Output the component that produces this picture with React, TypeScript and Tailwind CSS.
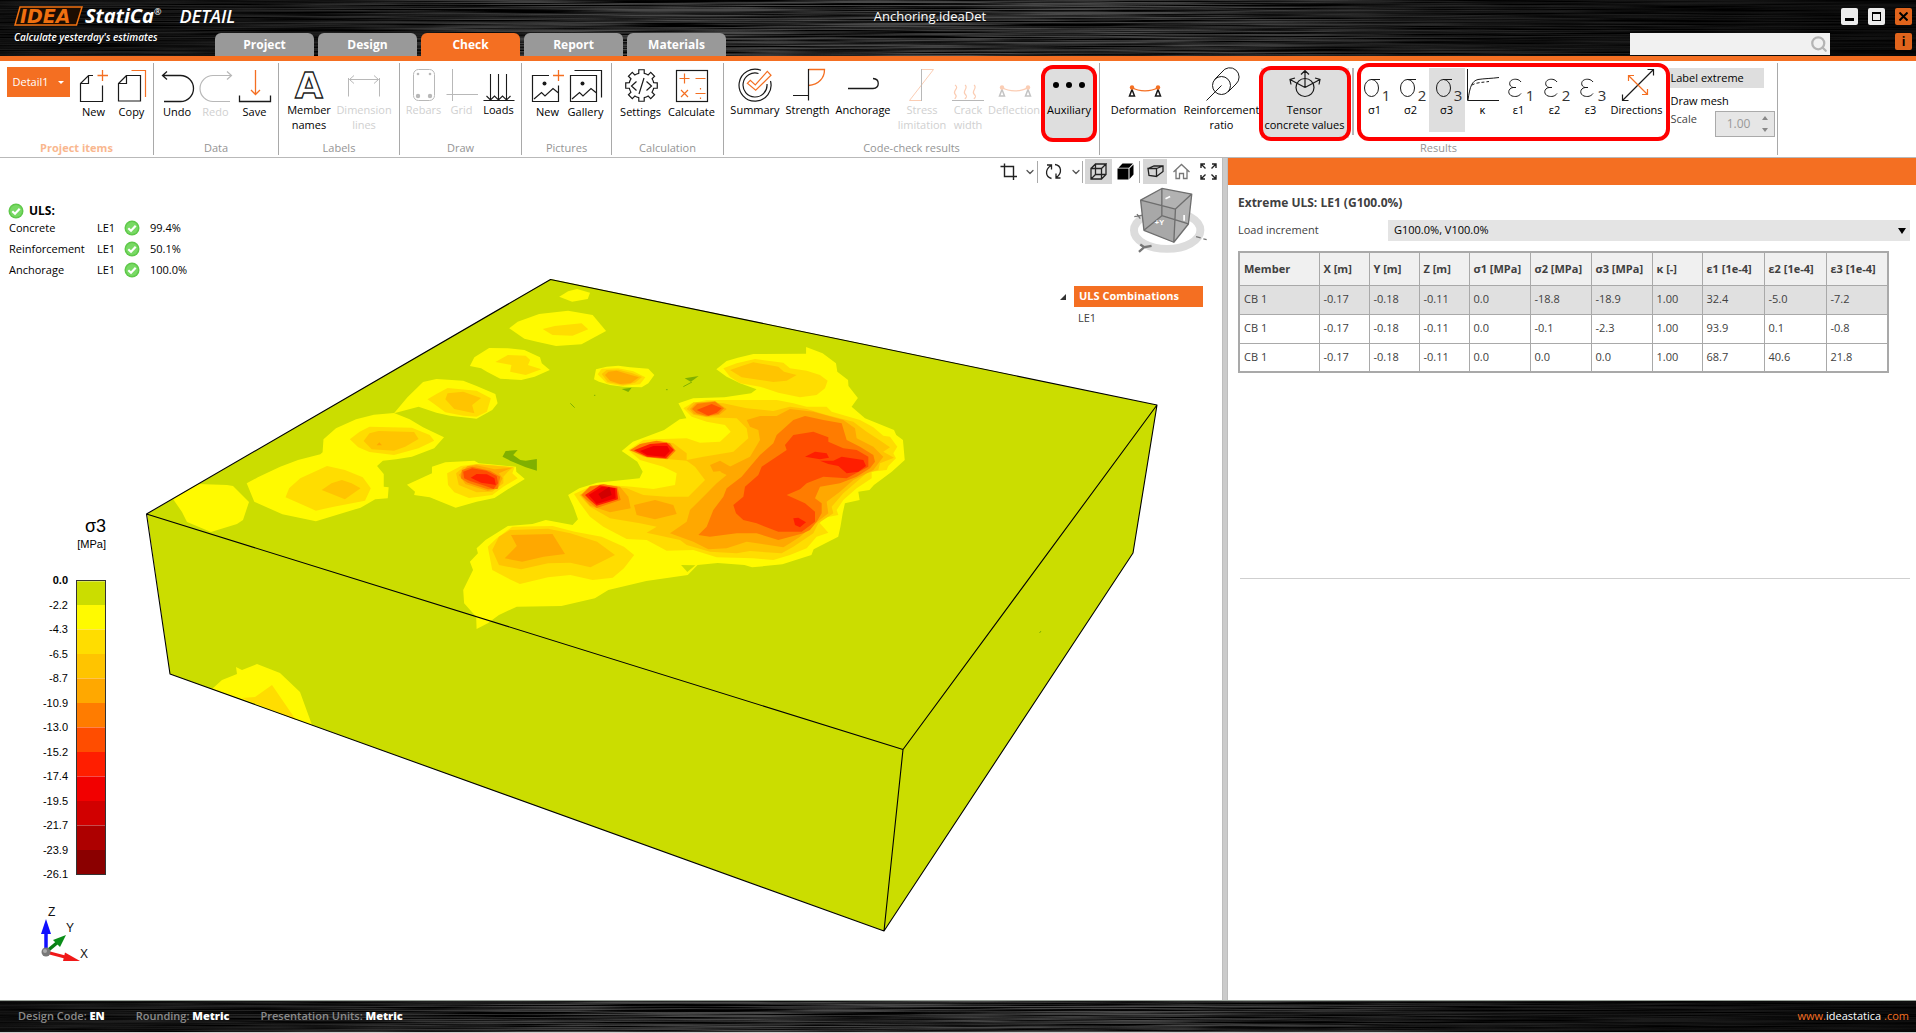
import React from "react";
import { Search, ChevronDown } from "lucide-react";

const O = "#f46f22";
const G = "#b8b8b8";
const K = "#1a1a1a";

function Brushed({ seed }: { seed: number }) {
  const id = "brushed" + seed;
  return (
    <svg className="pointer-events-none absolute inset-0 h-full w-full" preserveAspectRatio="none" aria-hidden="true">
      <filter id={id} x="0" y="0" width="100%" height="100%">
        <feTurbulence type="fractalNoise" baseFrequency="0.005 0.75" numOctaves="3" seed={seed} />
        <feColorMatrix type="matrix" values="0 0 0 0 0  0 0 0 0 0  0 0 0 0 0  2.6 0 0 0 -0.85" />
      </filter>
      <rect width="100%" height="100%" filter={`url(#${id})`} />
    </svg>
  );
}

function Icon({ children, stroke = K }: { children: React.ReactNode; stroke?: string }) {
  return (
    <svg width="34" height="34" viewBox="0 0 34 34" fill="none" stroke={stroke} strokeWidth="1" className="shrink-0 overflow-visible" aria-hidden="true">
      {children}
    </svg>
  );
}

function gearPath(cx: number, cy: number, outer: number, inner: number) {
  const pts: string[] = [];
  for (let i = 0; i < 8; i++) {
    const a = (i * Math.PI) / 4 - Math.PI / 2;
    const at = (r: number, d: number) => `${(cx + r * Math.cos(a + d)).toFixed(2)} ${(cy + r * Math.sin(a + d)).toFixed(2)}`;
    pts.push(`${i ? "L" : "M"}${at(inner, -0.22)} L${at(outer, -0.17)} L${at(outer, 0.17)} L${at(inner, 0.22)} A${inner} ${inner} 0 0 1 ${at(inner, 0.565)}`);
  }
  return pts.join(" ") + "Z";
}

const sub = (t: string) => (
  <text x="28" y="33" fontSize="15" textAnchor="middle" fill="#333" stroke="none" className="font-['Open_Sans',sans-serif]">{t}</text>
);
const sigma = (
  <>
    <ellipse cx="13.5" cy="20" rx="7" ry="8.5" />
    <path d="M13 11.5H22" />
  </>
);
const epsilon = <path d="M19 14C17 11 13 10.800 10.500 11.700C6.500 13.200 6.800 18.500 11 19.500H14M11 19.500C5.500 20.500 5.500 26.500 10 28C13.500 29 17 28.500 19 25.500" />;
const beam = (line: string, tri: string) => (
  <>
    <path d="M5 19.500C12 24 24 24 31 19.500" stroke={line} strokeWidth="1.300" />
    <path d="M5 21.500L2.500 28H7.500ZM31 21.500L28.500 28H33.500Z" stroke={tri} strokeWidth="1.500" />
    <circle cx="5" cy="19.500" r="2.200" fill={line} stroke="none" />
    <circle cx="31" cy="19.500" r="2.200" fill={line} stroke="none" />
  </>
);

const icons: Record<string, React.ReactNode> = {
  newDoc: <Icon><path d="M16 7.500H11.500L3.500 15.500V33.500H25.500V17.500M11.500 7.500V15.500H3.500" strokeWidth="1.200" /><path d="M20.500 7.500H31M25.500 2V13" stroke={O} strokeWidth="1.300" /></Icon>,
  copy: <Icon><path d="M11.500 7.500L3.500 15.500V33H25.500V7.500ZM11.500 7.500V15.500H3.500" strokeWidth="1.200" /><path d="M16.500 2.500H30.500V29" stroke={O} strokeWidth="1.200" /></Icon>,
  undo: <Icon><path d="M7 3.500L2.500 7.500L7 11.500M3 7.500H20.500A13 13 0 0 1 20.500 33.500H4" strokeWidth="1.300" /></Icon>,
  redo: <Icon stroke={G}><path d="M28 3.500L32.500 7.500L28 11.500M32 7.500H14A13 13 0 0 0 14 33.500H31" strokeWidth="1.200" /></Icon>,
  save: <Icon><path d="M17.500 2V26.500M13 22L17.500 26.500L22 22" stroke={O} strokeWidth="1.300" /><path d="M1.500 27.500V33.500H32.500V27.500" strokeWidth="1.300" /></Icon>,
  member: <Icon><text x="17" y="30" fontSize="36" fontWeight="700" textAnchor="middle" strokeWidth="1.300" className="font-['DejaVu_Sans',sans-serif]">A</text></Icon>,
  dimension: <Icon stroke={G}><path d="M1.500 10V28.500M32.500 10V28.500M2.500 11.500H31.500M7 7.500L2.500 11.500L7 15.500M27 7.500L31.500 11.500L27 15.500" /></Icon>,
  rebars: <Icon stroke={G}><rect x="6.500" y="1.500" width="21" height="31" rx="5" /><g fill={G} stroke="none"><circle cx="11" cy="6" r="1.300" /><circle cx="23" cy="6" r="1.300" /><circle cx="11" cy="28" r="2.200" /><circle cx="23" cy="28" r="2.200" /></g></Icon>,
  grid: <Icon stroke={G}><path d="M7.500 1V33M1.500 26.500H33" /></Icon>,
  loads: <Icon><path d="M1.500 32.500H32.500M8.500 6V32M16.500 6V32M24.500 6V32M4.500 28L8.500 32L12.500 28L16.500 32L20.500 28L24.500 32L28.500 28" strokeWidth="1.100" /></Icon>,
  newPic: <Icon><path d="M18 7.500H1.500V33.500H27.500V17.500M3 31L10.500 24.500L14 28L22 20.500L27.500 25" strokeWidth="1.200" /><circle cx="13.500" cy="15.500" r="2" fill={K} stroke="none" /><path d="M22 7.500H33M27.500 2V13" stroke={O} strokeWidth="1.300" /></Icon>,
  gallery: <Icon><path d="M1.500 7.500H27.500V33.500H1.500ZM3 31L10.500 24.500L14 28L22 20.500L27.500 25M5.500 2.500H32.500V29.500" strokeWidth="1.200" /><circle cx="13.500" cy="15.500" r="2" fill={K} stroke="none" /></Icon>,
  settings: <Icon><path d={gearPath(17.5, 17.5, 16, 12.5)} strokeWidth="1.200" /><path d="M12.500 13.500L7.500 18L12.500 22.500M22.500 13.500L27.500 18L22.500 22.500M20 10L15 26" strokeWidth="1.200" /></Icon>,
  calculate: <Icon><rect x="1.500" y="2.500" width="31" height="31" strokeWidth="1.200" /><g stroke={O} strokeWidth="1.200"><path d="M4.500 10.500H14.500M9.500 5.500V15.500M20.500 10.500H30.500M6 22L13 29M13 22L6 29M20.500 25.500H30.500M25.500 20V21.500M25.500 29.500V31" /></g></Icon>,
  summary: <Icon><path d="M23 2.300A16 16 0 1 0 32.500 13M20.500 5.500A12 12 0 1 0 29 16" strokeWidth="1.200" /><path d="M9.300 15.300L12.300 12.300L17.300 17L29.300 3.300L33 7.300L17.700 22.300Z" stroke={O} strokeWidth="1.200" /></Icon>,
  strength: <Icon><path d="M17.500 1.500H33.500C33.500 10 28 16.500 17.500 17.500" stroke={O} strokeWidth="1.300" /><path d="M17.500 1V32.500M2 27.500H17.500" strokeWidth="1.200" /></Icon>,
  anchorage: <Icon><path d="M2 20.500H27C34 20 34 11 27 10.500" strokeWidth="1.300" /></Icon>,
  stress: <Icon><path d="M16.500 1.500H28.500L4.500 32.500H16.500" stroke="#fbcdb4" /><path d="M16.500 1V33" stroke={G} /></Icon>,
  crack: <Icon stroke="#fbcdb4"><path d="M4 17C9 20 1 23 4 26S4 29 4 31M14 17C18 20 11 23 14 26S15 29 14 31M23 17C27 20 20 23 23 26S24 29 23 31" strokeWidth="1.200" /><path d="M1 32.500H33" stroke={G} /></Icon>,
  deflection: <Icon>{beam("#fbcdb4", "#c4c4c4")}</Icon>,
  auxiliary: <Icon><g fill="#000" stroke="none"><circle cx="4" cy="17" r="3" /><circle cx="17" cy="17" r="3" /><circle cx="30" cy="17" r="3" /></g></Icon>,
  deformation: <Icon>{beam(O, K)}</Icon>,
  ratio: <Icon><circle cx="16.500" cy="17.500" r="9" /><path d="M9.500 11.500L17 4M23 24L31 16M17 4A9.300 9.300 0 1 1 31 16M16.500 17.500L1.500 32.500" /></Icon>,
  tensor: <Icon><circle cx="17" cy="19.500" r="9" strokeWidth="1.200" /><path d="M17 19.500V2.500M13 6.500L17 2.500L21 6.500M17 19.500L2 11.500M3 16.500L2 11.500L7 10M17 19.500L32 11.500M31 16.500L32 11.500L27 10" strokeWidth="1.200" /></Icon>,
  s1: <Icon>{sigma}{sub("1")}</Icon>,
  s2: <Icon>{sigma}{sub("2")}</Icon>,
  s3: <Icon>{sigma}{sub("3")}</Icon>,
  kappa: <Icon><path d="M1.500 1V32.500H33M2 32C4 18 6 13 12 11.500C18 10.500 26 10.500 33 9.500" /><path d="M6 17C10 14.500 16 14.500 23 13.500" strokeDasharray="3 2" /></Icon>,
  e1: <Icon>{epsilon}{sub("1")}</Icon>,
  e2: <Icon>{epsilon}{sub("2")}</Icon>,
  e3: <Icon>{epsilon}{sub("3")}</Icon>,
  directions: <Icon><path d="M2.500 32.500L33.500 1.500M2.500 26.500V32.500H8.500M27.500 1.500H33.500V7.500" strokeWidth="1.200" /><path d="M8.500 7.500L27.500 26.500M8.500 13V7.500H14M22 26.500H27.500V21" stroke={O} strokeWidth="1.200" /></Icon>,
};

function Tool({ icon, label, w, disabled, active, low }: { icon: string; label: string; w: string; disabled?: boolean; active?: boolean; low?: boolean }) {
  return (
    <button
      disabled={disabled}
      className={`${w} flex shrink-0 flex-col items-center text-[11px] leading-[15px] ${active ? "bg-[#dedede]" : ""} ${disabled ? "text-[#d0d0d0]" : "text-black"}`}
    >
      {icons[icon]}
      <span className={`whitespace-pre text-center ${low ? "pt-0.5" : ""}`}>{label}</span>
    </button>
  );
}

function Group({ label, w, accent, children }: { label: string; w: string; accent?: boolean; children: React.ReactNode }) {
  return (
    <section className={`${w} flex shrink-0 flex-col justify-between border-r border-[#a9a9a9] pt-[5px]`} aria-label={label}>
      <div className="flex justify-center">{children}</div>
      <div className={`text-center text-[11px] leading-[15px] ${accent ? "font-bold text-[#f9b78f]" : "text-[#949494]"}`}>{label}</div>
    </section>
  );
}

function Ring({ className }: { className: string }) {
  return <div className={`pointer-events-none absolute z-10 rounded-xl border-4 border-[#ff0000] ${className}`} />;
}

function Tick() {
  return (
    <svg width="16" height="16" viewBox="0 0 16 16" role="img" aria-label="OK">
      <circle cx="8" cy="8" r="7.500" fill="#5fc84a" />
      <circle cx="8" cy="8" r="6" fill="#78d964" />
      <path d="M4.300 8.200L7 10.700L11.700 5.700" fill="none" stroke="#fff" strokeWidth="2.200" />
    </svg>
  );
}

const C = ["#cbdd00", "#fffa00", "#ffdd00", "#ffc400", "#ffa800", "#ff7c00", "#ff4d00", "#ff1e00", "#f20000", "#d10000", "#ad0000", "#8b0000"];
const DG = "#7fb000";
const P = ({ c, p }: { c: string; p: string }) => <polygon points={p} fill={c} />;

function Block() {
  return (
    <svg className="absolute inset-0 h-full w-full" viewBox="0 158 1222 842" role="img" aria-label="Concrete block stress contour">
      <polygon points="551,279 1157,405 1133,553 884,931 170,674 147,514" fill={C[0]} />
      <polygon points="173,499 191,488 198,484 227,485 233,486 249,502 243,520 237,524 211,532 187,522 182,512" fill={C[1]} />
      <polygon points="212,689 222,680 237,674 236,667 242,670 257,664 280,673 300,692 312,725" fill={C[1]} />
      <polygon points="242,698 255,697 272,685 296,720" fill={C[2]} />
      <g transform="translate(240 260) scale(0.44643 0.33333)">
        <P c={C[1]} p="715,110 735,94 755,87 784,98 779,117 744,125" />
        <P c={C[1]} p="603,205 622,185 670,162 735,152 790,165 820,213 765,253 708,258 665,245 637,236" />
        <P c={C[1]} p="515,318 525,292 558,264 600,265 637,270 672,292 676,310 694,330 660,350 630,360 583,356 553,335 540,325" />
        <P c={C[1]} p="345,460 375,412 410,366 440,357 500,362 530,378 572,402 577,430 565,450 530,476 470,467 440,458 400,440" />
        <P c={C[1]} p="185,577 187,538 215,505 260,478 300,464 345,459 380,478 410,502 457,532 435,565 385,590 350,598 320,602 307,618 322,642 322,680 333,682 331,715 303,718 270,743 170,784 95,763 32,725 15,670 40,652 90,620 130,600 180,583" />
        <P c={C[1]} p="374,674 430,640 430,620 460,607 525,602 535,610 560,613 618,620 619,635 638,657 600,688 570,714 530,725 483,743 425,712 390,705 392,695" />
        <P c={C[2]} p="678,207 705,198 765,190 780,208 745,227 700,225" />
        <P c={C[2]} p="572,306 600,285 640,287 650,300 645,315 675,328 640,345 605,335 608,315" />
        <P c={C[2]} p="420,418 440,402 465,384 530,392 562,415 553,455 530,470 500,467 460,457 435,432" />
        <P c={C[2]} p="246,538 268,515 290,500 385,503 425,525 435,542 400,565 345,585 290,576 265,562" />
        <P c={C[2]} p="102,712 110,685 135,655 195,618 235,630 275,652 293,685 280,722 210,740 170,752" />
        <P c={C[2]} p="464,640 495,618 530,612 560,614 615,622 610,640 622,655 590,680 565,705 513,714 480,697 466,675" />
        <P c={C[3]} p="460,418 465,400 500,395 540,414 520,435 525,460 480,447" />
        <P c={C[3]} p="277,543 290,520 310,513 390,516 400,537 370,560 345,572 295,568" />
        <P c={C[4]} p="306,556 312,547 318,556" />
        <P c={C[3]} p="183,690 205,670 228,660 250,670 270,685 235,718" />
        <P c={C[3]} p="484,640 500,622 530,613 612,622 600,635 590,650 590,670 565,695 530,697 490,675" />
        <P c={C[4]} p="490,645 510,618 530,616 570,628 608,624 580,640 588,655 578,685 555,693 505,672" />
        <P c={C[5]} p="495,655 497,630 520,620 560,632 583,650 577,687 555,688 510,668" />
        <P c={C[6]} p="502,655 500,635 520,625 552,632 575,648 578,670 568,687 550,678 515,663" />
        <P c={C[7]} p="517,653 530,642 553,643 570,655 573,675 560,672 540,668" />
        <P c={DG} p="588,590 595,573 622,570 612,585 628,600 640,602 665,597 665,632 640,622 605,602" />
        <P c={C[1]} p="1268,261 1305,280 1335,310 1338,335 1362,360 1363,378 1384,414 1370,440 1400,475 1465,510 1470,525 1485,540 1489,600 1460,635 1420,675 1410,690 1385,695 1388,720 1355,730 1350,760 1345,800 1340,830 1285,868 1280,885 1215,913 1147,922 1130,915 1070,909 1025,915 1003,945 910,963 825,990 795,1015 720,1038 620,1040 580,1065 555,1090 530,1107 529,1070 502,1030 500,990 522,930 515,905 533,880 530,865 550,840 600,798 655,792 685,780 745,795 757,778 747,740 735,705 760,685 800,668 895,655 902,635 890,605 855,573 880,545 950,510 985,478 1000,475 982,430 1015,415 1085,412 1145,400 1157,388 1120,370 1090,350 1067,328 1090,303 1115,293 1150,282 1268,281" />
        <P c={C[0]} p="988,915 1020,916 1002,936" />
        <P c={C[2]} p="555,860 575,835 610,800 700,798 750,815 810,830 860,860 883,885 860,925 835,953 790,960 740,945 690,952 627,972 600,955 565,930" />
        <P c={C[3]} p="565,870 580,830 605,810 690,806 740,820 800,845 840,885 785,922 740,908 690,910 630,928 580,915" />
        <P c={C[4]} p="607,825 700,822 728,882 680,890 632,905 593,895 620,858" />
      </g>
      <g transform="translate(560 340) scale(0.33333)">
        <P c={C[1]} p="102,118 108,88 140,80 175,77 210,82 265,86 283,105 265,130 245,142 190,140 150,135 117,125" />
        <P c={C[2]} p="113,103 125,86 175,85 220,94 256,112 240,133 185,138 140,130" />
        <P c={C[3]} p="125,102 140,90 175,89 215,99 246,111 225,128 190,136 143,126" />
        <P c={C[4]} p="135,105 145,95 170,92 205,103 237,112 212,130 180,132 150,122" />
        <P c={DG} p="374,115 416,108 400,120 392,125" />
        <P c={DG} p="185,147 215,143 205,156" />
        <path d="M31 190L44 203M370 140L396 126M102 166H106M318 149H323" stroke={DG} strokeWidth="3" />
        <P c={C[2]} p="490,85 530,70 585,57 670,68 690,85 740,92 780,105 803,122 795,145 770,165 720,172 655,158 600,140 540,130 510,110" />
        <P c={C[3]} p="510,90 545,78 580,67 655,80 672,95 710,105 680,122 640,126 600,120 545,112" />
        <P c={C[2]} p="370,205 395,190 440,180 560,180 650,180 700,190 740,200 800,200 815,215 900,240 940,262 970,287 990,290 1012,320 1000,340 1008,355 985,378 980,390 935,395 935,415 890,445 850,480 830,510 835,525 785,535 780,550 805,578 770,590 740,625 690,645 640,660 580,655 470,652 400,630 320,632 260,600 200,597 130,560 90,530 60,490 42,462 80,445 120,433 215,440 280,447 345,435 350,400 310,380 240,360 205,330 250,300 285,298 380,295 420,308 480,305 512,275 495,255 440,245 395,230" />
        <P c={C[3]} p="380,207 400,187 490,190 560,205 640,213 690,200 740,207 800,225 880,245 920,275 950,295 990,322 970,335 1002,353 960,370 955,390 920,400 890,425 850,460 815,500 820,520 775,550 760,580 700,620 665,640 570,633 530,640 450,635 380,615 360,600 260,578 290,560 240,550 150,535 90,500 58,465 120,435 200,445 250,465 320,470 385,470 435,420 405,380 380,362 330,358 250,350 208,330 250,308 300,302 340,310 380,340 380,360 430,350 520,335 565,295 560,265 530,235 440,232 400,224" />
        <P c={C[4]} p="560,240 600,228 650,228 690,207 760,215 850,240 885,265 890,295 940,320 970,350 940,390 880,420 840,455 800,485 805,520 760,555 720,590 690,610 670,622 560,605 500,625 445,628 400,605 330,580 380,545 390,510 430,470 470,430 500,405 480,395 530,370 570,350 600,300 595,270 570,260" />
        <P c={C[4]} p="450,375 480,362 512,380 490,392 460,395" />
        <P c={C[4]} p="222,495 285,480 340,495 350,522 285,538 230,525" />
        <P c={C[4]} p="62,465 90,438 130,433 180,440 205,470 212,505 150,517 90,497" />
        <P c={C[5]} p="415,585 440,560 460,510 490,470 500,445 545,410 570,380 600,345 640,310 650,285 700,240 735,228 790,240 845,250 860,300 900,320 940,345 945,365 930,385 890,410 840,430 780,440 765,475 785,490 785,520 770,545 750,570 730,580 655,600 590,580 530,580 450,590" />
        <P c={C[6]} p="520,495 550,470 555,440 595,405 605,380 680,330 675,315 700,285 760,275 805,292 805,305 850,325 890,330 925,350 925,380 860,415 790,410 740,430 720,448 680,465 735,490 765,515 765,545 725,575 655,575 590,550 550,540 528,520" />
        <P c={C[7]} p="735,350 765,335 800,340 807,353 780,358" />
        <P c={C[7]} p="780,362 820,362 845,350 910,360 918,378 895,395 860,400 835,378 805,372" />
        <P c={C[7]} p="700,535 715,533 738,547 720,562 705,555" />
        <P c={C[4]} p="390,207 408,188 465,183 500,207 478,225 440,230 402,222" />
        <P c={C[5]} p="396,207 412,191 465,185 492,205 475,222 440,228 410,220" />
        <P c={C[6]} p="410,210 455,192 485,205 470,218 445,227" />
        <P c={C[5]} p="210,331 240,312 290,302 330,310 347,332 322,358 260,352" />
        <P c={C[7]} p="222,331 270,312 320,308 342,330 318,355 262,350" />
        <P c={C[8]} p="240,333 280,318 322,318 330,333 314,350 262,346" />
        <P c={C[5]} p="65,465 90,440 130,433 172,440 182,480 110,504 80,480" />
        <P c={C[7]} p="75,465 120,436 170,445 174,478 110,497 90,480" />
        <P c={C[8]} p="86,465 125,440 165,445 167,475 110,492" />
        <P c={C[9]} p="115,462 148,440 155,465 125,478" />
      </g>
      <path d="M146.500 514L550.500 279.500L1157 405L1133 553L884 931L170 674ZM146.500 514L903 749.500L1157 405M903 749.500L884 931" fill="none" stroke="#000" strokeWidth="1.100" strokeLinejoin="round" />
      <path d="M1039.500 633L1041 631" stroke={DG} />
    </svg>
  );
}

const scale = ["0.0", "-2.2", "-4.3", "-6.5", "-8.7", "-10.9", "-13.0", "-15.2", "-17.4", "-19.5", "-21.7", "-23.9", "-26.1"];

function Legend() {
  return (
    <div className="absolute left-8 top-[358px] w-[74px] font-['Liberation_Sans',Arial,sans-serif] text-black">
      <div className="text-right text-lg leading-5">σ3</div>
      <div className="text-right text-[11px] leading-4">[MPa]</div>
      <div className="mt-[22px] flex items-center justify-between">
        <div className="flex h-[306px] w-9 flex-col justify-between text-right text-[11px] leading-3">
          {scale.map((s, i) => <span key={s} className={i ? "" : "font-bold"}>{s}</span>)}
        </div>
        <div className="flex h-[295px] w-[30px] flex-col border border-[#333]">
          {C.map((c, i) => <div key={c} className={`flex-1 ${i % 2 ? "" : "border-t border-white/30"}`} style={{ background: c }} />)}
        </div>
      </div>
    </div>
  );
}

function Triad() {
  return (
    <svg className="absolute bottom-7 left-9" width="60" height="70" viewBox="36 903 60 70" role="img" aria-label="Axes">
      <path d="M46 953V930" stroke="#1010ff" strokeWidth="3.500" /><polygon points="46,920 41,935 51,935" fill="#1010ff" />
      <path d="M46 953L58 943" stroke="#0a7d14" strokeWidth="3.500" /><polygon points="66,936 53,941 60,948" fill="#0a8d18" />
      <path d="M46 953L65 958" stroke="#f01818" strokeWidth="3" /><polygon points="80,962 65,953.500 63,962" fill="#f01818" />
      <circle cx="46" cy="953" r="4.500" fill="#777" /><circle cx="45" cy="952" r="2" fill="#aaa" />
      <g fontSize="12" fill="#111" className="font-['Liberation_Sans',sans-serif]"><text x="48" y="917">Z</text><text x="66" y="933">Y</text><text x="80" y="959">X</text></g>
    </svg>
  );
}

function NavCube() {
  return (
    <svg className="absolute right-3 top-[27px]" width="83" height="70" viewBox="440 105 250 210" role="img" aria-label="View cube">
      <ellipse cx="561" cy="241" rx="100" ry="56" fill="none" stroke="#dcdcdc" strokeWidth="24" />
      <polygon points="545,115 635,132 625,222 581,277 491,241 481,150" fill="#b2b2b2" />
      <polygon points="481,150 586,177 581,277 491,241" fill="#a8a8a8" />
      <g fill="none" stroke="#6e6e6e" strokeWidth="4" strokeLinejoin="round">
        <path d="M545 115L635 132L586 177L481 150ZM481 150L491 241L581 277L625 222L635 132M586 177L581 277M545 115V197L491 241M545 197L625 222" />
      </g>
      <g fill="#fff" fontWeight="700" fontSize="22" className="font-['Liberation_Sans',sans-serif]"><text x="524" y="226">+Y</text></g>
      <path d="M556 146L570 139M612 195V212" stroke="#fff" strokeWidth="5" />
      <path d="M480 284L492 292L514 288M492 292L476 306" stroke="#777" strokeWidth="7" fill="none" />
      <path d="M462 200L486 196M470 192L480 206M648 260L662 264M670 267L680 269" stroke="#777" strokeWidth="4" />
    </svg>
  );
}

function TB({ children, w, active, label }: { children: React.ReactNode; w: string; active?: boolean; label: string }) {
  return <button aria-label={label} className={`${w} flex h-[25px] items-center justify-center ${active ? "bg-[#d6d6d6]" : ""}`}>{children}</button>;
}
const Sep = () => <div className="h-[22px] w-px bg-[#aaa]" />;
const S = ({ children, size = 17 }: { children: React.ReactNode; size?: number }) => (
  <svg width={size} height={size} viewBox="0 0 17 17" fill="none" stroke="#222" strokeWidth="1.300" aria-hidden="true">{children}</svg>
);

function ViewToolbar() {
  return (
    <div className="absolute right-0.5 top-px flex items-center">
      <TB w="w-7" label="Section"><S><path d="M4.500 0.500V13.500H17M0.500 3.500H13.500V17" strokeWidth="1.400" /></S></TB>
      <TB w="w-[15px]" label="Section options"><ChevronDown size={12} strokeWidth={2.5} color="#555" /></TB>
      <Sep />
      <TB w="w-[31px]" label="Rotate"><S><path d="M6.500 15.500C0.500 14 -0.500 7 6 2.500M2 2H6.500V6.500M10 1.500C16.500 2.500 17.500 10 11.500 14.500M11 10.500V15H15.500" /></S></TB>
      <TB w="w-[13px]" label="Rotate options"><ChevronDown size={12} strokeWidth={2.5} color="#555" /></TB>
      <Sep />
      <div className="w-0.5" />
      <TB w="w-[27px]" active label="Wireframe"><S><path d="M1 5.500H11.500V16H1ZM1 5.500L5.500 1H16L11.500 5.500M16 1V11.500L11.500 16M5.500 1V11.500H16M5.500 11.500L1 16" /></S></TB>
      <TB w="w-[27px]" label="Solid"><S><path d="M0.500 5.500H11.500V16.500H0.500Z" fill="#000" stroke="none" /><path d="M1.500 4.700L5.500 0.500H16L12 4.700ZM12.500 5.500L16.500 1.500V11.500L12.500 16Z" fill="#000" stroke="none" /></S></TB>
      <Sep />
      <div className="w-[3px]" />
      <TB w="w-6" active label="Perspective"><S><path d="M1 5.500H9.500V13.500L2 12.500ZM1 5.500L7 3H16V8.500L9.500 13.500M9.500 5.500L16 3" /></S></TB>
      <TB w="w-[29px]" label="Home"><S><path d="M0.500 9L8.500 1.500L16.500 9M3 7V15.500H6.500V10.500H10.500V15.500H14V7" stroke="#777" /></S></TB>
      <TB w="w-6" label="Fit all"><S><path d="M1 5V1H5M1 1L5.500 5.500M12 1H16V5M16 1L11.500 5.500M1 12V16H5M1 16L5.500 11.500M12 16H16V12M16 16L11.500 11.500" strokeWidth="1.400" /></S></TB>
    </div>
  );
}

const checks = [["Concrete", "99.4%"], ["Reinforcement", "50.1%"], ["Anchorage", "100.0%"]];
const head = ["Member", "X [m]", "Y [m]", "Z [m]", "σ1 [MPa]", "σ2 [MPa]", "σ3 [MPa]", "κ [-]", "ε1 [1e-4]", "ε2 [1e-4]", "ε3 [1e-4]"];
const colW = ["w-20", "w-[50px]", "w-[50px]", "w-[50px]", "w-[61px]", "w-[61px]", "w-[61px]", "w-[50px]", "w-[62px]", "w-[62px]", "w-[62px]"];
const rows = [
  ["CB 1", "-0.17", "-0.18", "-0.11", "0.0", "-18.8", "-18.9", "1.00", "32.4", "-5.0", "-7.2"],
  ["CB 1", "-0.17", "-0.18", "-0.11", "0.0", "-0.1", "-2.3", "1.00", "93.9", "0.1", "-0.8"],
  ["CB 1", "-0.17", "-0.18", "-0.11", "0.0", "0.0", "0.0", "1.00", "68.7", "40.6", "21.8"],
];
const metal = "relative bg-[linear-gradient(90deg,#1a1a1a_0%,#262626_15%,#484848_32%,#484848_62%,#222222_78%,#101010_100%)]";

function Header() {
  return (
    <header className={`${metal} flex h-[61px] shrink-0 border-b-[5px] border-[#f46f22]`}>
      <Brushed seed={4} />
      <div className="relative w-[215px] shrink-0">
        <div className="flex items-start pl-3.5 pt-1.5 text-white">
          <svg width="69" height="20" viewBox="0 0 69 20" role="img" aria-label="IDEA" className="shrink-0 overflow-visible">
            <polygon points="6,1 68,1 62.500,19 1,19" fill="#1c0d02" stroke="#f07010" strokeWidth="1.500" />
            <text x="6" y="16.500" fontSize="19" fontWeight="700" fontStyle="italic" fill="#f07010" className="font-['DejaVu_Sans',sans-serif]">IDEA</text>
          </svg>
          <span className="pl-0.5 font-['Open_Sans',sans-serif] text-xl font-bold italic leading-5">StatiCa</span>
          <span className="text-[9px] leading-3">®</span>
          <span className="pl-[18px] font-['Open_Sans',sans-serif] text-lg font-semibold italic leading-5">DETAIL</span>
        </div>
        <div className="pl-3.5 pt-[5px] font-['Open_Sans',sans-serif] text-[10px] font-semibold italic leading-3 text-white">Calculate yesterday&apos;s estimates</div>
      </div>
      <nav className="relative flex items-end gap-1 self-end text-xs font-bold text-white" aria-label="Main">
        {["Project", "Design", "Check", "Report", "Materials"].map((t) => (
          <button key={t} className={`h-[23px] w-[99px] rounded-t-md ${t === "Check" ? "bg-[#f46f22]" : "bg-[#999]"}`}>{t}</button>
        ))}
      </nav>
      <div className="pointer-events-none absolute inset-x-0 top-2 pr-14 text-center text-[13px] leading-4 text-white">Anchoring.ideaDet</div>
      <div className="relative ml-auto flex flex-col items-end gap-2 pr-1 pt-2">
        <div className="flex gap-2.5">
          <button aria-label="Minimize" className="flex size-[17px] items-end justify-center rounded-xs bg-[#ececec] pb-1"><i className="h-[3px] w-[9px] bg-black" /></button>
          <button aria-label="Maximize" className="flex size-[17px] items-center justify-center rounded-xs bg-[#ececec]"><i className="size-[9px] border border-t-2 border-black" /></button>
          <button aria-label="Close" className="flex size-[17px] items-center justify-center rounded-xs bg-[#e0641c]">
            <svg width="9" height="9" viewBox="0 0 9 9" stroke="#000" strokeWidth="2"><path d="M0.500 0.500L8.500 8.500M8.500 0.500L0.500 8.500" /></svg>
          </button>
        </div>
        <div className="flex items-start gap-[65px]">
          <label className="flex h-[22px] w-[200px] items-center bg-[#f1f1f1] pr-0.5">
            <input aria-label="Search" className="min-w-0 flex-1 bg-transparent px-1 text-xs outline-none" />
            <Search size={18} strokeWidth={3} color="#b4b4b4" />
          </label>
          <button aria-label="Info" className="flex size-[17px] items-center justify-center rounded-xs bg-[#e0641c] text-xs font-bold text-black">i</button>
        </div>
      </div>
    </header>
  );
}

function Ribbon() {
  return (
    <div className="flex h-[97px] shrink-0 overflow-hidden border-b border-[#b9b9b9] bg-white py-0.5">
      <Group label="Project items" w="w-[154px]" accent>
        <button className="ml-1 mr-[5px] mt-[-1px] flex h-[30px] w-[63px] items-center justify-between bg-[#f46f22] pl-1.5 pr-1.5 text-[11px] text-white">
          Detail1<i className="border-x-[3px] border-t-[3px] border-x-transparent border-t-white" />
        </button>
        <Tool icon="newDoc" label="New" w="w-[38px]" low /><Tool icon="copy" label="Copy" w="w-[38px]" low />
      </Group>
      <Group label="Data" w="w-[125px]">
        <Tool icon="undo" label="Undo" w="w-[38px]" low /><Tool icon="redo" label="Redo" w="w-[39px]" low disabled /><Tool icon="save" label="Save" w="w-[39px]" low />
      </Group>
      <Group label="Labels" w="w-[121px]">
        <Tool icon="member" label={"Member\nnames"} w="w-[50px]" /><Tool icon="dimension" label={"Dimension\nlines"} w="w-[60px]" disabled />
      </Group>
      <Group label="Draw" w="w-[122px]">
        <Tool icon="rebars" label="Rebars" w="w-[38px]" disabled /><Tool icon="grid" label="Grid" w="w-[38px]" disabled /><Tool icon="loads" label="Loads" w="w-[36px]" />
      </Group>
      <Group label="Pictures" w="w-[90px]">
        <Tool icon="newPic" label="New" w="w-[38px]" low /><Tool icon="gallery" label="Gallery" w="w-[38px]" low />
      </Group>
      <Group label="Calculation" w="w-28">
        <Tool icon="settings" label="Settings" w="w-12" low /><Tool icon="calculate" label="Calculate" w="w-[54px]" low />
      </Group>
      <Group label="Code-check results" w="w-[376px]">
        <Tool icon="summary" label="Summary" w="w-[54px]" /><Tool icon="strength" label="Strength" w="w-[51px]" /><Tool icon="anchorage" label="Anchorage" w="w-[60px]" />
        <Tool icon="stress" label={"Stress\nlimitation"} w="w-[58px]" disabled /><Tool icon="crack" label={"Crack\nwidth"} w="w-[34px]" disabled /><Tool icon="deflection" label="Deflection" w="w-[58px]" disabled />
        <div className="relative flex h-[70px]">
          <Tool icon="auxiliary" label="Auxiliary" w="w-[52px]" active />
          <Ring className="-inset-x-0.5 -bottom-1 -top-[3px]" />
        </div>
      </Group>
      <Group label="Results" w="w-[678px]">
        <Tool icon="deformation" label="Deformation" w="w-[82px]" /><Tool icon="ratio" label={"Reinforcement\nratio"} w="w-[74px]" />
        <div className="relative flex h-[70px] pl-0.5">
          <Tool icon="tensor" label={"Tensor\nconcrete values"} w="w-[88px]" active />
          <Ring className="-bottom-[3px] -right-0.5 -top-0.5 left-0" />
        </div>
        <div className="mx-[3px] h-[67px] w-0.5 bg-[#b5b5b5]" />
        <div className="relative flex h-16">
          {[["s1", "σ1"], ["s2", "σ2"], ["s3", "σ3"], ["kappa", "κ"], ["e1", "ε1"], ["e2", "ε2"], ["e3", "ε3"]].map(([i, l]) => (
            <Tool key={i} icon={i} label={l} w="w-9" active={i === "s3"} />
          ))}
          <Tool icon="directions" label="Directions" w="w-14" />
          <Ring className="-bottom-[9px] -right-[5px] -top-[5px] left-0" />
        </div>
        <div className="ml-1 flex w-[106px] flex-col text-[11px]">
          <button className="h-5 w-[95px] bg-[#dedede] pl-0.5 text-left">Label extreme</button>
          <button className="mt-[3px] h-5 pl-0.5 text-left">Draw mesh</button>
          <label className="flex items-start justify-between pl-0.5 text-[#444]">
            Scale
            <span className="flex h-[26px] w-[60px] items-center border border-[#aaa] bg-[#e6e6e6] pr-1.5">
              <input disabled defaultValue="1.00" className="w-full min-w-0 text-center text-xs text-[#999]" />
              <span className="flex flex-col gap-2">
                <i className="border-x-[3px] border-b-4 border-x-transparent border-b-[#888]" />
                <i className="border-x-[3px] border-t-4 border-x-transparent border-t-[#888]" />
              </span>
            </span>
          </label>
        </div>
      </Group>
    </div>
  );
}

function ResultsPanel() {
  return (
    <aside className="min-w-0 flex-1 text-[11px] text-[#404040]">
      <div className="h-[27px] bg-[#f46f22]" />
      <div className="pl-2.5 pr-1.5">
        <h2 className="pt-2.5 text-xs font-bold leading-4">Extreme ULS: LE1 (G100.0%)</h2>
        <div className="flex items-center pt-[9px]">
          <label htmlFor="increment" className="w-[150px] shrink-0">Load increment</label>
          <div className="relative flex-1">
            <select id="increment" className="h-[21px] w-full appearance-none bg-[#e4e4e4] px-1.5 text-black outline-none"><option>G100.0%, V100.0%</option></select>
            <i className="pointer-events-none absolute right-1 top-2 border-x-4 border-t-[6px] border-x-transparent border-t-black" />
          </div>
        </div>
        <table className="mt-2.5 w-[650px] table-fixed border-collapse border-2 border-[#a9a9a9] text-left">
          <thead>
            <tr className="h-[33px] bg-[#f0f0f0]">
              {head.map((h, i) => <th key={h} className={`${colW[i]} whitespace-nowrap border border-[#a9a9a9] pl-1 font-bold`}>{h}</th>)}
            </tr>
          </thead>
          <tbody>
            {rows.map((r, i) => (
              <tr key={i} className={`h-[29px] ${i ? "" : "bg-[#e0e0e0]"}`}>
                {r.map((v, j) => <td key={j} className="border border-[#a9a9a9] pl-1">{v}</td>)}
              </tr>
            ))}
          </tbody>
        </table>
        <hr className="ml-0.5 mt-[205px] border-[#cfcfcf]" />
      </div>
    </aside>
  );
}

export default function App() {
  return (
    <div className="flex h-screen min-h-[700px] flex-col overflow-hidden bg-white font-['Open_Sans','Noto_Sans',sans-serif]">
      <Header />
      <Ribbon />
      <main className="flex min-h-0 flex-1">
        <section className="relative w-[1222px] shrink-0 overflow-hidden" aria-label="3D view">
          <Block />
          <div className="absolute left-2 top-[47px] text-[11px] text-black">
            <div className="flex h-3 items-center gap-[5px] text-xs font-bold"><Tick />ULS:</div>
            {checks.map(([n, v]) => (
              <div key={n} className="grid h-[21px] grid-cols-[88px_27px_26px_auto] items-center pl-px leading-[21px]">
                <span>{n}</span><span>LE1</span><Tick /><span>{v}</span>
              </div>
            ))}
          </div>
          <Legend />
          <Triad />
          <ViewToolbar />
          <NavCube />
          <div className="absolute right-[19px] top-32 flex w-[143px] items-start gap-2 text-[11px]">
            <i className="mt-2 border-b-[6px] border-l-[6px] border-b-[#333] border-l-transparent" />
            <div className="flex-1">
              <button className="h-[21px] w-full bg-[#f46f22] pl-[5px] text-left font-bold text-white">ULS Combinations</button>
              <button className="block h-[22px] pl-1 text-[#404040]">LE1</button>
            </div>
          </div>
        </section>
        <div className="w-1.5 shrink-0 border-x border-[#bdbdbd] bg-[#cbcbcb]" />
        <ResultsPanel />
      </main>
      <footer className={`${metal} flex h-8 shrink-0 items-center border-t border-[#9aa39a] text-[11px]`}>
        <Brushed seed={9} />
        <div className="relative flex gap-[31px] pl-[18px] font-semibold text-[#8a8a8a]">
          <span>Design Code: <b className="text-white">EN</b></span>
          <span>Rounding: <b className="text-white">Metric</b></span>
          <span>Presentation Units: <b className="text-white">Metric</b></span>
        </div>
        <a href="#" className="relative ml-auto pr-[7px] text-[#f46f22]">www.<span className="text-white">ideastatica</span> .com</a>
      </footer>
      <div className="h-px shrink-0 bg-[#ccc]" />
    </div>
  );
}
